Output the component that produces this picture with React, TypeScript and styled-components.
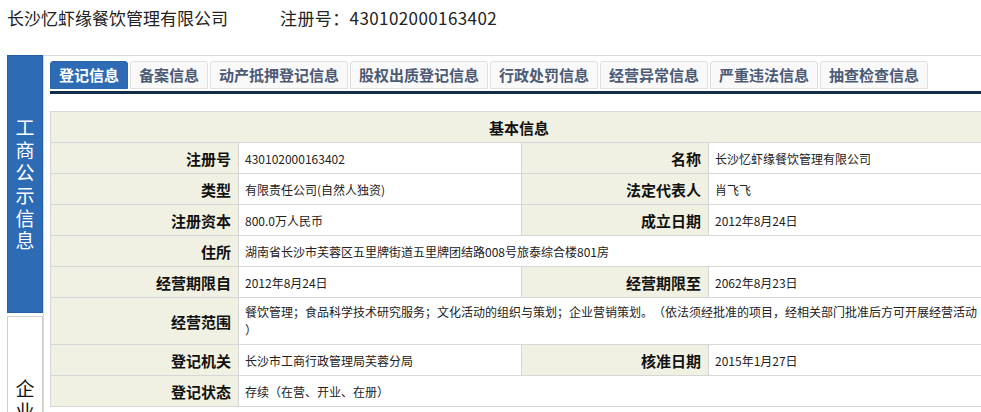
import styled, { createGlobalStyle } from "styled-components";

const GlobalStyle = createGlobalStyle`
  html, body {
    margin: 0;
    padding: 0;
    overflow: hidden;
    background: #ffffff;
  }

  body {
    font-family: "Noto Sans CJK SC", "Noto Sans", sans-serif;
    color: #222222;
    text-spacing-trim: space-all;
  }
`;

const StyledPage = styled.div`
  width: 1000px;
`;

const StyledHeader = styled.div`
  display: flex;
  height: 36px;
  padding-left: 7px;
  font-size: 17px;
  line-height: 36px;
  color: #222222;
`;

const StyledCompany = styled.span`
  width: 273px;
`;

const StyledRegNo = styled.span`
  letter-spacing: 0.4px;
`;

const StyledBody = styled.div`
  display: flex;
  margin-top: 19px;
  padding-left: 7px;
`;

const StyledSide = styled.div`
  display: flex;
  flex-direction: column;
  gap: 3px;
  width: 36px;
`;

const StyledSideItem = styled.div<{ $active?: boolean }>`
  display: flex;
  align-items: center;
  justify-content: center;
  box-sizing: border-box;
  height: 258px;
  border: 1px solid ${(p) => (p.$active ? "#235ea6" : "#cfcfcf")};
  background: ${(p) => (p.$active ? "#2d6bb4" : "#ffffff")};
  color: ${(p) => (p.$active ? "#ffffff" : "#111111")};
  font-size: 19px;
  line-height: 22.6px;
  text-align: center;
`;

const StyledSideText = styled.div`
  width: 20px;
  word-break: break-all;
`;

const StyledPanel = styled.div`
  flex: 1;
  border-top: 1px solid #d8d8d8;
  border-left: 1px solid #d8d8d8;
  padding: 5px 0 0 6px;
`;

const StyledTabs = styled.div`
  display: flex;
  gap: 2px;
  padding-bottom: 2px;
  border-bottom: 3px solid #112d4b;
`;

const StyledTab = styled.div<{ $active?: boolean }>`
  box-sizing: border-box;
  height: 28px;
  padding: 0 8px;
  border: 1px solid ${(p) => (p.$active ? "#2a66ad" : "#e0e0e0")};
  border-radius: 3px 3px 0 0;
  background: ${(p) => (p.$active ? "#2d6bb4" : "#f9f9f9")};
  color: ${(p) => (p.$active ? "#ffffff" : "#4c5a76")};
  font-size: 15px;
  font-weight: 700;
  line-height: 26px;
  white-space: nowrap;
`;

const StyledTable = styled.table`
  width: 938px;
  margin-top: 17px;
  border-collapse: collapse;
  table-layout: fixed;
`;

const StyledRow = styled.tr`
  height: 31px;
`;

const StyledCaption = styled.th`
  border: 1px solid #d6d6d6;
  background: #f1f1e3;
  font-size: 15px;
  font-weight: 700;
  text-align: center;
  color: #111111;
  padding: 0;
`;

const StyledLabel = styled.th`
  border: 1px solid #d6d6d6;
  background: #f1f1e3;
  font-size: 15px;
  font-weight: 700;
  text-align: right;
  color: #111111;
  padding: 0 7px 0 0;
`;

const StyledValue = styled.td<{ $wrap?: boolean }>`
  border: 1px solid #d6d6d6;
  font-size: 12px;
  color: #222222;
  padding: ${(p) => (p.$wrap ? "5px 6px" : "0 6px")};
  line-height: ${(p) => (p.$wrap ? "18px" : "normal")};
  line-break: anywhere;
  white-space: ${(p) => (p.$wrap ? "normal" : "nowrap")};
`;

const tabs = [
  "登记信息",
  "备案信息",
  "动产抵押登记信息",
  "股权出质登记信息",
  "行政处罚信息",
  "经营异常信息",
  "严重违法信息",
  "抽查检查信息",
];

const pairs: [string, string, string, string][] = [
  ["注册号", "430102000163402", "名称", "长沙忆虾缘餐饮管理有限公司"],
  ["类型", "有限责任公司(自然人独资)", "法定代表人", "肖飞飞"],
  ["注册资本", "800.0万人民币", "成立日期", "2012年8月24日"],
];

const scope =
  "餐饮管理；食品科学技术研究服务；文化活动的组织与策划；企业营销策划。（依法须经批准的项目，经相关部门批准后方可开展经营活动）";

const App = (): React.ReactElement => {
  return (
    <>
      <GlobalStyle />
      <StyledPage>
        <StyledHeader>
          <StyledCompany>长沙忆虾缘餐饮管理有限公司</StyledCompany>
          <StyledRegNo>注册号：430102000163402</StyledRegNo>
        </StyledHeader>
        <StyledBody>
          <StyledSide>
            <StyledSideItem $active>
              <StyledSideText>工商公示信息</StyledSideText>
            </StyledSideItem>
            <StyledSideItem>
              <StyledSideText>企业公示信息</StyledSideText>
            </StyledSideItem>
          </StyledSide>
          <StyledPanel>
            <StyledTabs>
              {tabs.map((tab, i) => (
                <StyledTab key={tab} $active={i === 0}>
                  {tab}
                </StyledTab>
              ))}
            </StyledTabs>
            <StyledTable>
              <colgroup>
                <col style={{ width: 188 }} />
                <col style={{ width: 283 }} />
                <col style={{ width: 187 }} />
                <col />
              </colgroup>
              <tbody>
                <StyledRow>
                  <StyledCaption colSpan={4}>基本信息</StyledCaption>
                </StyledRow>
                {pairs.map(([l1, v1, l2, v2]) => (
                  <StyledRow key={l1}>
                    <StyledLabel>{l1}</StyledLabel>
                    <StyledValue>{v1}</StyledValue>
                    <StyledLabel>{l2}</StyledLabel>
                    <StyledValue>{v2}</StyledValue>
                  </StyledRow>
                ))}
                <StyledRow>
                  <StyledLabel>住所</StyledLabel>
                  <StyledValue colSpan={3}>湖南省长沙市芙蓉区五里牌街道五里牌团结路008号旅泰综合楼801房</StyledValue>
                </StyledRow>
                <StyledRow>
                  <StyledLabel>经营期限自</StyledLabel>
                  <StyledValue>2012年8月24日</StyledValue>
                  <StyledLabel>经营期限至</StyledLabel>
                  <StyledValue>2062年8月23日</StyledValue>
                </StyledRow>
                <StyledRow>
                  <StyledLabel>经营范围</StyledLabel>
                  <StyledValue colSpan={3} $wrap>
                    {scope}
                  </StyledValue>
                </StyledRow>
                <StyledRow>
                  <StyledLabel>登记机关</StyledLabel>
                  <StyledValue>长沙市工商行政管理局芙蓉分局</StyledValue>
                  <StyledLabel>核准日期</StyledLabel>
                  <StyledValue>2015年1月27日</StyledValue>
                </StyledRow>
                <StyledRow>
                  <StyledLabel>登记状态</StyledLabel>
                  <StyledValue colSpan={3}>存续（在营、开业、在册）</StyledValue>
                </StyledRow>
              </tbody>
            </StyledTable>
          </StyledPanel>
        </StyledBody>
      </StyledPage>
    </>
  );
};

export default App;
